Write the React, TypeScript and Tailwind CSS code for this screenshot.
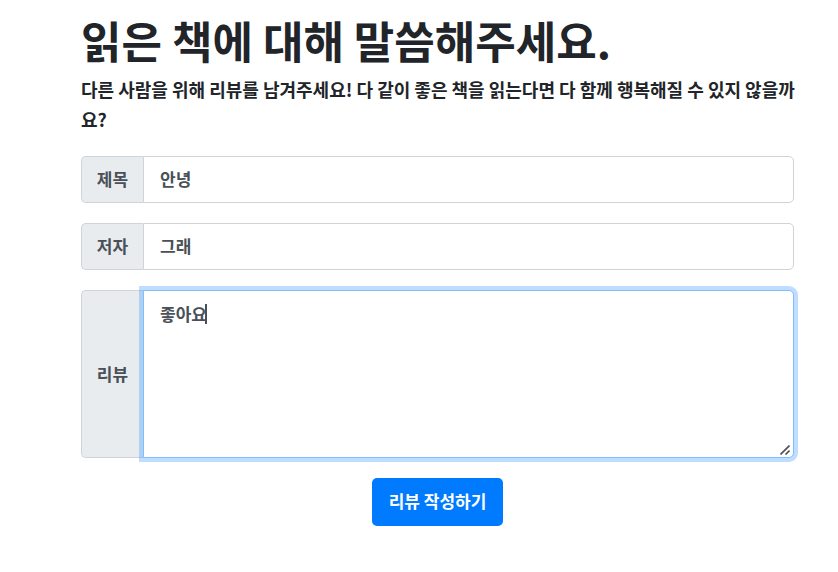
export default function App() {
  const label =
    "flex items-center justify-center rounded-l-[5px] border border-r-0 border-[#ced4da] bg-[#e9ecef] w-[62px] shrink-0 pb-[2px] text-[#495057]";
  const field =
    "block min-w-0 flex-1 rounded-r-[5px] border border-[#ced4da] bg-white px-4 pt-[7px] pb-[9px] text-[#495057] outline-none";
  return (
    <main className="ml-[81px] mr-[44px] pt-3 font-['Noto_Sans_CJK_KR',sans-serif] text-[17px] font-bold leading-[29px] text-[#212529]">
      <h1 className="text-[44px] leading-[56px]">읽은 책에 대해 말씀해주세요.</h1>
      <p className="-mr-1 mt-[6px] break-all text-[18px] leading-[30px]">
        다른 사람을 위해 리뷰를 남겨주세요! 다 같이 좋은 책을 읽는다면 다 함께 행복해질 수 있지 않을까요?
      </p>
      <form className="mt-[22px] flex flex-col gap-5" onSubmit={(e) => e.preventDefault()}>
        <div className="flex">
          <label htmlFor="title" className={label}>제목</label>
          <input id="title" type="text" defaultValue="안녕" className={field} />
        </div>
        <div className="flex">
          <label htmlFor="author" className={label}>저자</label>
          <input id="author" type="text" defaultValue="그래" className={field} />
        </div>
        <div className="flex">
          <label htmlFor="review" className={label}>리뷰</label>
          <div className="relative min-w-0 flex-1">
            <textarea
              id="review"
              defaultValue="좋아요"
              className="block h-[168px] w-full resize-none rounded-r-[5px] border border-[#80bdff] bg-white px-4 py-2 text-[#495057] caret-transparent shadow-[0_0_0_4px_rgba(0,123,255,0.25)] outline-none"
            />
            <span aria-hidden="true" className="pointer-events-none absolute left-[62px] top-[14px] h-5 w-[2px] bg-[#495057]" />
            <svg
              aria-hidden="true"
              viewBox="0 0 10 10"
              className="pointer-events-none absolute bottom-[3px] right-1 h-[10px] w-[10px]"
              fill="none"
              stroke="#505050"
              strokeWidth="1.6"
            >
              <path d="M0.5 9.5 9.5 0.5M5.5 9.5 9.5 5.5" />
            </svg>
          </div>
        </div>
        <button type="submit" className="self-center rounded-[5px] bg-[#007bff] px-[17px] pt-2 pb-[10px] leading-[30px] text-white">
          리뷰 작성하기
        </button>
      </form>
    </main>
  );
}
